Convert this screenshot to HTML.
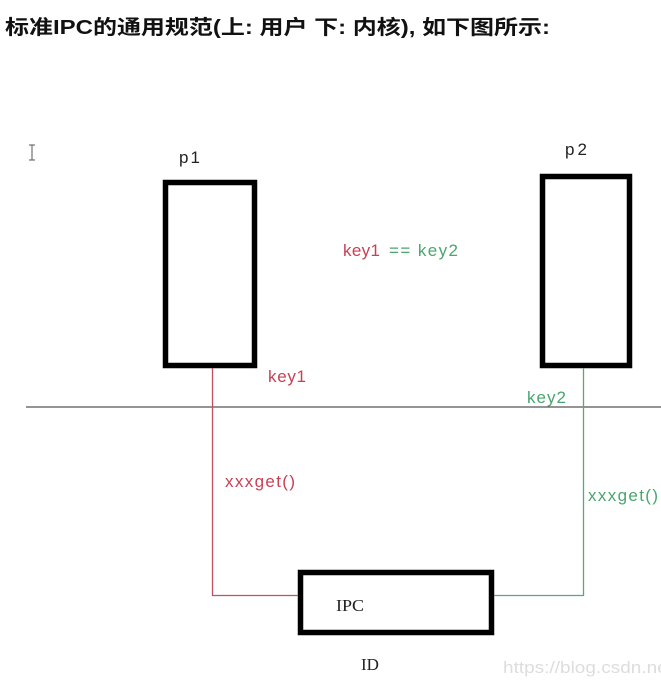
<!DOCTYPE html>
<html><head><meta charset="utf-8"><style>
html,body{margin:0;padding:0;background:#fff;width:661px;height:683px;overflow:hidden}
svg{position:absolute;left:0;top:0}
</style></head><body>
<svg width="661" height="683" viewBox="0 0 661 683" xmlns="http://www.w3.org/2000/svg">
<text x="5" y="34" font-family="Liberation Sans, Noto Sans CJK SC, sans-serif" font-weight="bold" font-size="20" fill="#111" textLength="545" lengthAdjust="spacingAndGlyphs">标准IPC的通用规范(上: 用户 下: 内核), 如下图所示:</text>
<path d="M29 145h6M32 145v15M29 160h6" stroke="#555" stroke-width="1" fill="none"/>
<rect x="165.5" y="182.5" width="89" height="183" fill="none" stroke="#000" stroke-width="5.5"/>
<rect x="542.5" y="176.5" width="87" height="189" fill="none" stroke="#000" stroke-width="5.5"/>
<rect x="300.5" y="572.5" width="191" height="60" fill="none" stroke="#000" stroke-width="5.5"/>
<line x1="26" y1="407" x2="661" y2="407" stroke="#555" stroke-width="1.3"/>
<path d="M212.5 368V595.5H298" stroke="#c0505e" stroke-width="1.3" fill="none"/>
<path d="M583.5 368V595.5H494" stroke="#5aa878" stroke-width="1.3" fill="none"/>
<g font-family="Liberation Sans, sans-serif" font-size="17" lengthAdjust="spacingAndGlyphs">
<text x="179" y="163" fill="#222" textLength="21">p1</text>
<text x="565" y="155" fill="#222" textLength="22">p2</text>
<text x="343" y="256" fill="#c94055" textLength="37">key1</text>
<text x="389" y="256" fill="#4aa56e" textLength="69">== key2</text>
<text x="268" y="382" fill="#c94055" textLength="38">key1</text>
<text x="527" y="403" fill="#4aa56e" textLength="39">key2</text>
<text x="225" y="487" fill="#c94055" textLength="70">xxxget()</text>
<text x="588" y="501" fill="#4aa56e" textLength="70">xxxget()</text>
</g>
<g font-family="Liberation Serif, serif" font-size="17" fill="#222">
<text x="336" y="611" textLength="28" lengthAdjust="spacingAndGlyphs">IPC</text>
<text x="361" y="670">ID</text>
</g>
<text x="503" y="673" font-family="Liberation Sans, sans-serif" font-size="17" fill="#ddd" textLength="170" lengthAdjust="spacingAndGlyphs">https://blog.csdn.net</text>
</svg>
</body></html>
